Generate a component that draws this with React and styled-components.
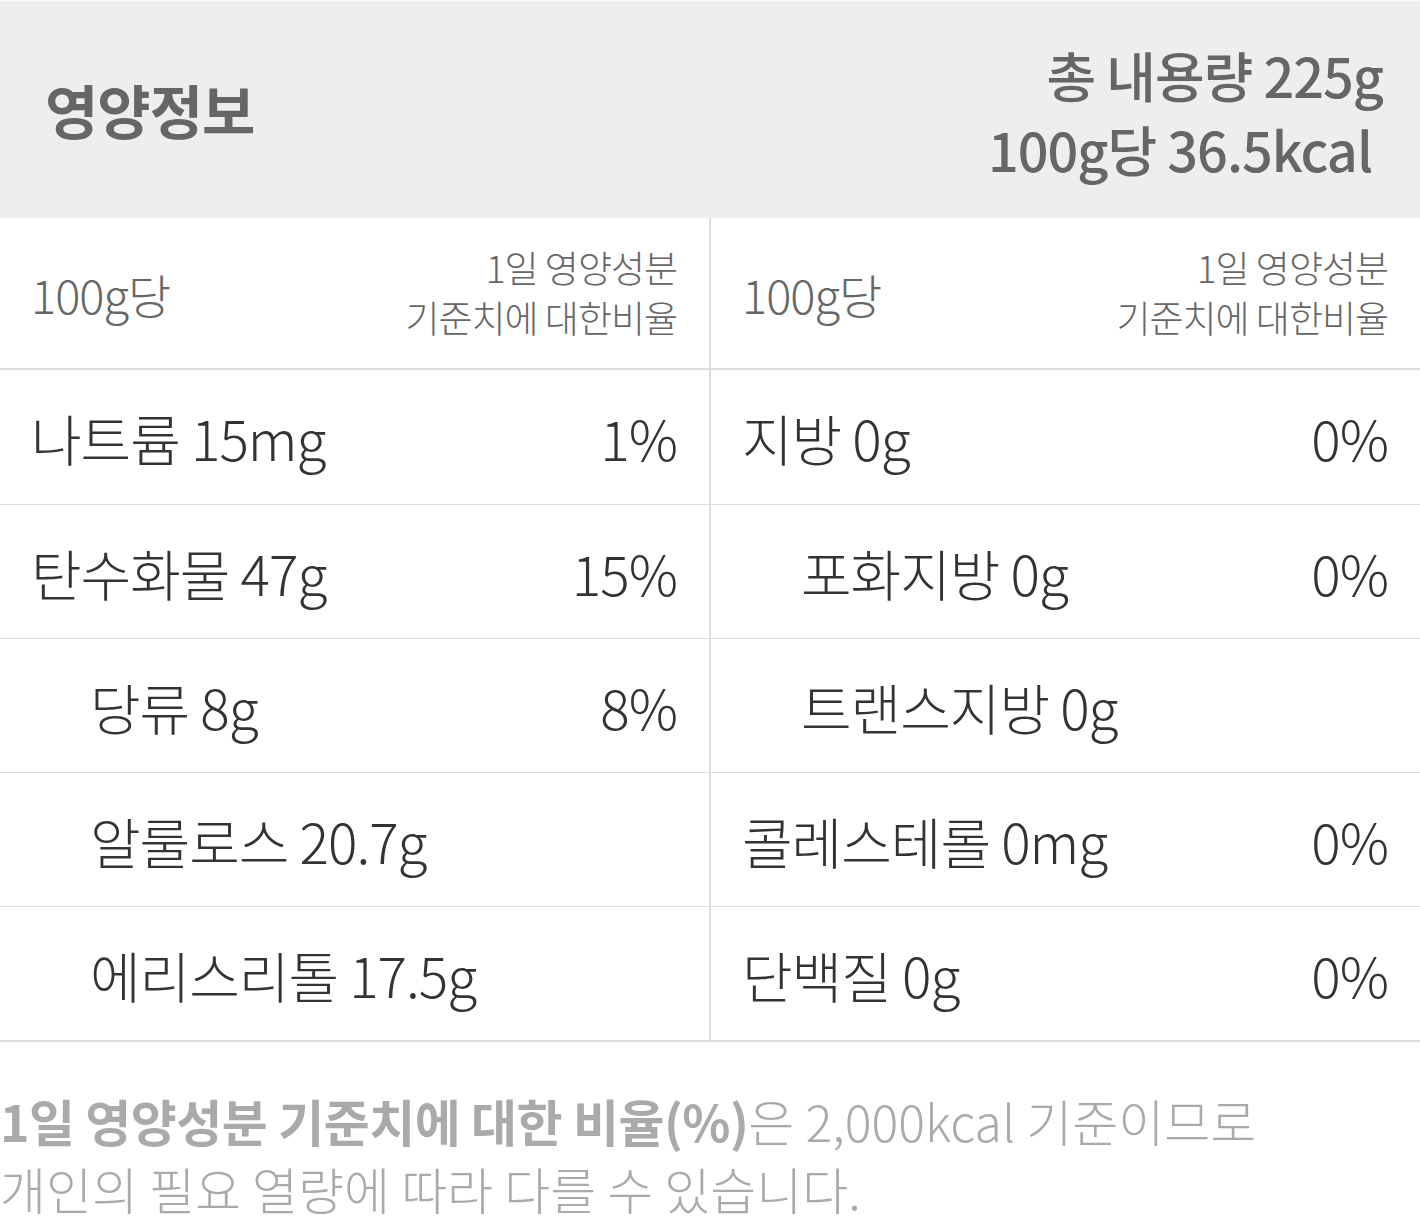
import React from 'react';
import styled, { createGlobalStyle } from 'styled-components';

const GlobalStyle = createGlobalStyle`
  body {
    margin: 0;
    background: #fff;
    font-family: 'Noto Sans CJK KR', 'Noto Sans', sans-serif;
  }
`;

const Page = styled.div`
  width: 1420px;
  font-family: 'Noto Sans CJK KR', 'Noto Sans', sans-serif;
`;

const Header = styled.header`
  height: 218px;
  box-sizing: border-box;
  background: #eeeeee;
  border-top: 1px solid #f6f6f6;
  display: flex;
  align-items: center;
  justify-content: space-between;
  padding: 0 37px 0 45px;
  color: #666;
`;

const Title = styled.h1`
  margin: 0 0 2px;
  font-size: 58px;
  font-weight: 700;
  letter-spacing: -1px;
`;

const Summary = styled.div`
  display: flex;
  flex-direction: column;
  align-items: flex-end;
  font-size: 54px;
  font-weight: 500;
  line-height: 74px;
  letter-spacing: -1px;
  margin-top: 4px;

  span:last-child {
    margin-right: 11px;
  }
`;

const Table = styled.div`
  display: grid;
  grid-template-columns: 711px 1fr;
  border-bottom: 2px solid #dddddd;
`;

const Column = styled.div`
  display: flex;
  flex-direction: column;
  border-right: ${(p) => (p.$divider ? '2px solid #dddddd' : 'none')};
`;

const HeadCell = styled.div`
  height: 152px;
  box-sizing: border-box;
  border-bottom: 2px solid #dddddd;
  display: flex;
  align-items: center;
  justify-content: space-between;
  padding: 0 32px 0 31px;
  color: #666;
  font-weight: 300;
`;

const Per = styled.span`
  font-size: 47px;
  letter-spacing: -1px;
`;

const Ratio = styled.span`
  text-align: right;
  font-size: 37px;
  line-height: 50px;
  letter-spacing: -1px;
  margin-bottom: 2px;
`;

const Row = styled.div`
  height: 134px;
  box-sizing: border-box;
  border-top: ${(p) => (p.$first ? 'none' : '1px solid #dddddd')};
  display: flex;
  align-items: center;
  justify-content: space-between;
  padding: 0 32px 0 ${(p) => (p.$indent ? '90px' : '31px')};
  color: #333;
  font-size: 55px;
  font-weight: 300;
  letter-spacing: -1px;
`;

const Footer = styled.p`
  margin: 0;
  padding: 44px 0 0 0;
  color: #aaaaaa;
  font-size: 50px;
  font-weight: 300;
  line-height: 68px;

  strong {
    font-weight: 700;
    letter-spacing: -0.5px;
  }
`;

const left = [
  { name: '나트륨 15mg', pct: '1%' },
  { name: '탄수화물 47g', pct: '15%' },
  { name: '당류 8g', pct: '8%', indent: true },
  { name: '알룰로스 20.7g', pct: '', indent: true },
  { name: '에리스리톨 17.5g', pct: '', indent: true },
];

const right = [
  { name: '지방 0g', pct: '0%' },
  { name: '포화지방 0g', pct: '0%', indent: true },
  { name: '트랜스지방 0g', pct: '', indent: true },
  { name: '콜레스테롤 0mg', pct: '0%' },
  { name: '단백질 0g', pct: '0%' },
];

function NutrientColumn({ items, divider }) {
  return (
    <Column $divider={divider}>
      <HeadCell>
        <Per>100g당</Per>
        <Ratio>
          1일 영양성분
          <br />
          기준치에 대한비율
        </Ratio>
      </HeadCell>
      {items.map((item, i) => (
        <Row key={item.name} $first={i === 0} $indent={item.indent}>
          <span>{item.name}</span>
          <span>{item.pct}</span>
        </Row>
      ))}
    </Column>
  );
}

export default function App() {
  return (
    <Page>
      <GlobalStyle />
      <Header>
        <Title>영양정보</Title>
        <Summary>
          <span>총 내용량 225g</span>
          <span>100g당 36.5kcal</span>
        </Summary>
      </Header>
      <Table>
        <NutrientColumn items={left} divider />
        <NutrientColumn items={right} />
      </Table>
      <Footer>
        <strong>1일 영양성분 기준치에 대한 비율(%)</strong>은 2,000kcal 기준이므로
        <br />
        개인의 필요 열량에 따라 다를 수 있습니다.
      </Footer>
    </Page>
  );
}
